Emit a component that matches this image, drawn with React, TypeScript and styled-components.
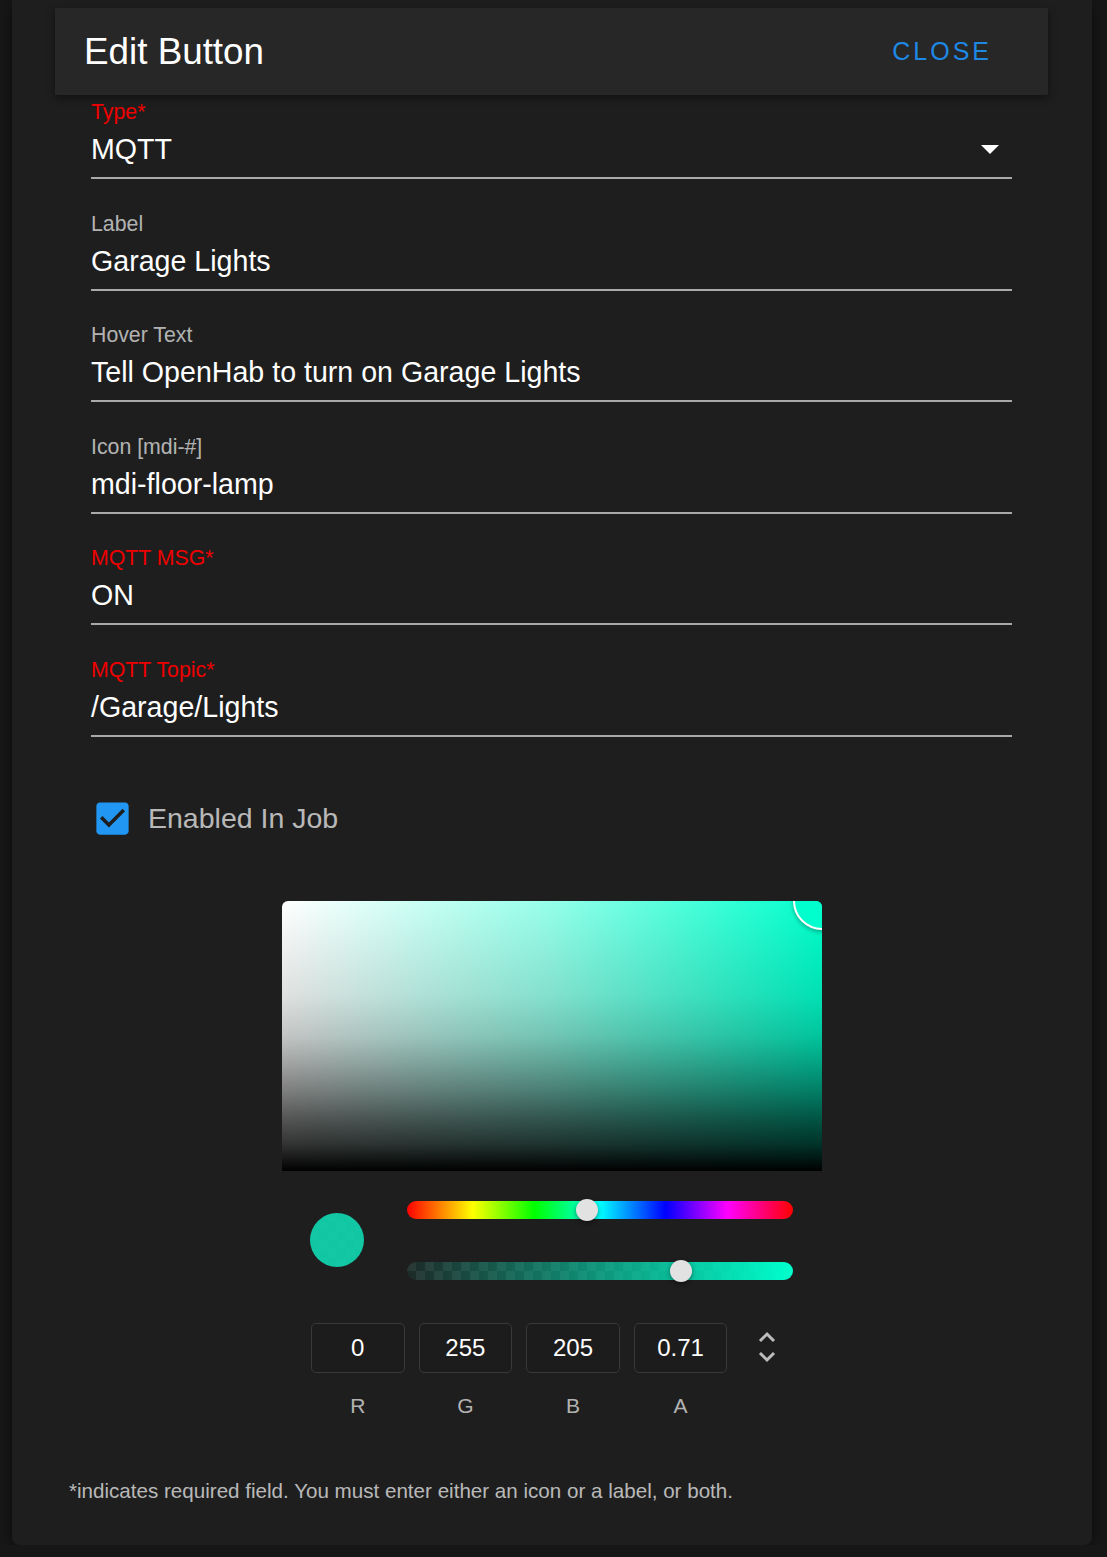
import styled, { createGlobalStyle } from 'styled-components'

const GlobalStyle = createGlobalStyle`
    html, body {
        margin: 0;
        padding: 0;
        background: #171717;
        font-family: "Liberation Sans", Arial, sans-serif;
    }
`

const Panel = styled.div`
    width: 1080px;
    margin-left: 12px;
    padding-top: 8px;
    padding-bottom: 42px;
    box-sizing: border-box;
    background: #1e1e1e;
    border-radius: 0 0 7px 7px;
    box-shadow: 0 4px 14px rgba(0, 0, 0, 0.5);
`

const Header = styled.div`
    margin: 0 44px 0 43px;
    height: 87px;
    padding: 0 56px 0 29px;
    display: flex;
    align-items: center;
    justify-content: space-between;
    background: #272727;
    box-shadow: 0 3px 8px rgba(0, 0, 0, 0.45);
`

const Title = styled.h1`
    margin: 0;
    font-size: 36.8px;
    font-weight: normal;
    color: #fff;
`

const CloseButton = styled.button`
    border: 0;
    padding: 0;
    background: transparent;
    color: #1e88e5;
    font-family: inherit;
    font-size: 25px;
    letter-spacing: 3px;
    cursor: pointer;
`

const Form = styled.div`
    padding: 5px 80px 0 79px;
`

const Field = styled.div`
    margin-top: 32.6px;
    padding-bottom: 13px;
    border-bottom: 2px solid rgba(255, 255, 255, 0.62);

    &:first-child {
        margin-top: 0;
    }
`

const FieldLabel = styled.div<{ $required?: boolean }>`
    font-size: 21.3px;
    line-height: 24px;
    color: ${p => (p.$required ? '#ee0000' : 'rgba(255, 255, 255, 0.68)')};
`

const ValueRow = styled.div`
    margin-top: 10px;
    display: flex;
    align-items: center;
    justify-content: space-between;
`

const Value = styled.div`
    font-size: 28.6px;
    line-height: 30px;
    color: #fff;
`

const Caret = styled.span`
    width: 0;
    height: 0;
    margin-right: 13px;
    border-left: 9px solid transparent;
    border-right: 9px solid transparent;
    border-top: 9px solid #fff;
`

const CheckRow = styled.label`
    margin-top: 60px;
    display: flex;
    align-items: center;
    gap: 14px;
    font-size: 28.5px;
    color: rgba(255, 255, 255, 0.7);
`

const Picker = styled.div`
    width: 540px;
    margin: 61px auto 0;
`

const Saturation = styled.div`
    position: relative;
    height: 270px;
    border-radius: 6px 6px 0 0;
    overflow: hidden;
    background:
        linear-gradient(to top, #000 0%, rgba(0, 0, 0, 0.8) 10%, rgba(0, 0, 0, 0.66) 20%, rgba(0, 0, 0, 0.5) 30%, rgba(0, 0, 0, 0.36) 40%, rgba(0, 0, 0, 0.23) 50%, rgba(0, 0, 0, 0.12) 65%, rgba(0, 0, 0, 0) 100%),
        linear-gradient(to right, #fff 0%, rgba(255, 255, 255, 0.58) 50%, rgba(255, 255, 255, 0) 100%),
        #00ffcc;
`

const SatPointer = styled.div`
    position: absolute;
    right: -29px;
    top: -29px;
    width: 54px;
    height: 54px;
    border-radius: 50%;
    border: 2px solid #fff;
    background: #00ffcd;
    box-shadow: 0 2px 4px rgba(0, 0, 0, 0.3);
`

const Controls = styled.div`
    margin-top: 30px;
    padding: 0 29px 0 28px;
    display: flex;
    align-items: center;
    gap: 43px;
`

const checker = (a: string, b: string, size: number) =>
    `conic-gradient(${a} 25%, ${b} 0 50%, ${a} 0 75%, ${b} 0) 0 0 / ${size}px ${size}px`

const Swatch = styled.div`
    width: 54px;
    height: 54px;
    flex: none;
    border-radius: 50%;
    background: linear-gradient(rgba(0, 255, 205, 0.71), rgba(0, 255, 205, 0.71)),
        ${checker('#3a3a3a', '#404040', 18)};
`

const Sliders = styled.div`
    flex: 1;
    display: flex;
    flex-direction: column;
    gap: 43px;
`

const Track = styled.div<{ $kind: 'hue' | 'alpha' }>`
    position: relative;
    height: 18px;
    border-radius: 9px;
    background: ${p =>
        p.$kind === 'hue'
            ? 'linear-gradient(to right, #f00 0%, #ff0 17%, #0f0 33%, #0ff 50%, #00f 67%, #f0f 83%, #f00 100%)'
            : `linear-gradient(to right, rgba(0, 255, 205, 0.05), rgb(0, 255, 205)), ${checker('#1e1e1e', '#2c2c2c', 18)}`};
`

const Thumb = styled.div`
    position: absolute;
    top: 50%;
    width: 22px;
    height: 22px;
    border-radius: 50%;
    background: #e2e2e2;
    transform: translate(-50%, -50%);
    box-shadow: 0 2px 5px rgba(0, 0, 0, 0.45);
`

const Inputs = styled.div`
    margin-top: 43px;
    padding-left: 29px;
    display: flex;
    align-items: flex-start;
    gap: 14px;
`

const Channel = styled.div`
    width: 93.6px;
    display: flex;
    flex-direction: column;
    align-items: center;
    gap: 21px;
`

const NumBox = styled.div`
    width: 93.6px;
    height: 50px;
    box-sizing: border-box;
    border: 1px solid #393939;
    border-radius: 5px;
    background: #1c1c1c;
    display: flex;
    align-items: center;
    justify-content: center;
    font-size: 24px;
    color: #fff;
`

const ChannelName = styled.div`
    font-size: 21px;
    line-height: 24px;
    color: rgba(255, 255, 255, 0.68);
`

const Toggle = styled.button`
    margin: 8px 0 0 17px;
    padding: 0;
    border: 0;
    background: transparent;
    display: flex;
    cursor: pointer;
`

const Note = styled.p`
    margin: 61px 0 0 57px;
    font-size: 20.6px;
    line-height: 24px;
    color: rgba(255, 255, 255, 0.7);
`

type FieldDef = { label: string; value: string; required?: boolean; select?: boolean }

const fields: FieldDef[] = [
    { label: 'Type*', value: 'MQTT', required: true, select: true },
    { label: 'Label', value: 'Garage Lights' },
    { label: 'Hover Text', value: 'Tell OpenHab to turn on Garage Lights' },
    { label: 'Icon [mdi-#]', value: 'mdi-floor-lamp' },
    { label: 'MQTT MSG*', value: 'ON', required: true },
    { label: 'MQTT Topic*', value: '/Garage/Lights', required: true },
]

const channels = [
    { name: 'R', value: '0' },
    { name: 'G', value: '255' },
    { name: 'B', value: '205' },
    { name: 'A', value: '0.71' },
]

const hue = 168
const alpha = 0.71

const CheckIcon = () => (
    <svg width="43" height="43" viewBox="0 0 24 24">
        <path
            fill="#2196f3"
            d="M19 3H5c-1.11 0-2 .9-2 2v14c0 1.1.89 2 2 2h14c1.11 0 2-.9 2-2V5c0-1.1-.89-2-2-2zm-9 14l-5-5 1.41-1.41L10 14.17l7.59-7.59L19 8l-9 9z"
        />
    </svg>
)

const UpDownIcon = () => (
    <svg width="18" height="32" viewBox="0 0 18 32" fill="none" stroke="#bdbdbd" strokeWidth="3">
        <polyline points="2,10 9,3 16,10" />
        <polyline points="2,22 9,29 16,22" />
    </svg>
)

const App = (): JSX.Element => {
    return (
        <>
            <GlobalStyle />
            <Panel>
                <Header>
                    <Title>Edit Button</Title>
                    <CloseButton type="button">CLOSE</CloseButton>
                </Header>
                <Form>
                    {fields.map(f => (
                        <Field key={f.label}>
                            <FieldLabel $required={f.required}>{f.label}</FieldLabel>
                            <ValueRow>
                                <Value>{f.value}</Value>
                                {f.select && <Caret />}
                            </ValueRow>
                        </Field>
                    ))}
                    <CheckRow>
                        <CheckIcon />
                        Enabled In Job
                    </CheckRow>
                </Form>
                <Picker>
                    <Saturation>
                        <SatPointer />
                    </Saturation>
                    <Controls>
                        <Swatch />
                        <Sliders>
                            <Track $kind="hue">
                                <Thumb style={{ left: `${(hue / 360) * 100}%` }} />
                            </Track>
                            <Track $kind="alpha">
                                <Thumb style={{ left: `${alpha * 100}%` }} />
                            </Track>
                        </Sliders>
                    </Controls>
                    <Inputs>
                        {channels.map(c => (
                            <Channel key={c.name}>
                                <NumBox>{c.value}</NumBox>
                                <ChannelName>{c.name}</ChannelName>
                            </Channel>
                        ))}
                        <Toggle type="button">
                            <UpDownIcon />
                        </Toggle>
                    </Inputs>
                </Picker>
                <Note>*indicates required field. You must enter either an icon or a label, or both.</Note>
            </Panel>
        </>
    )
}

export default App
